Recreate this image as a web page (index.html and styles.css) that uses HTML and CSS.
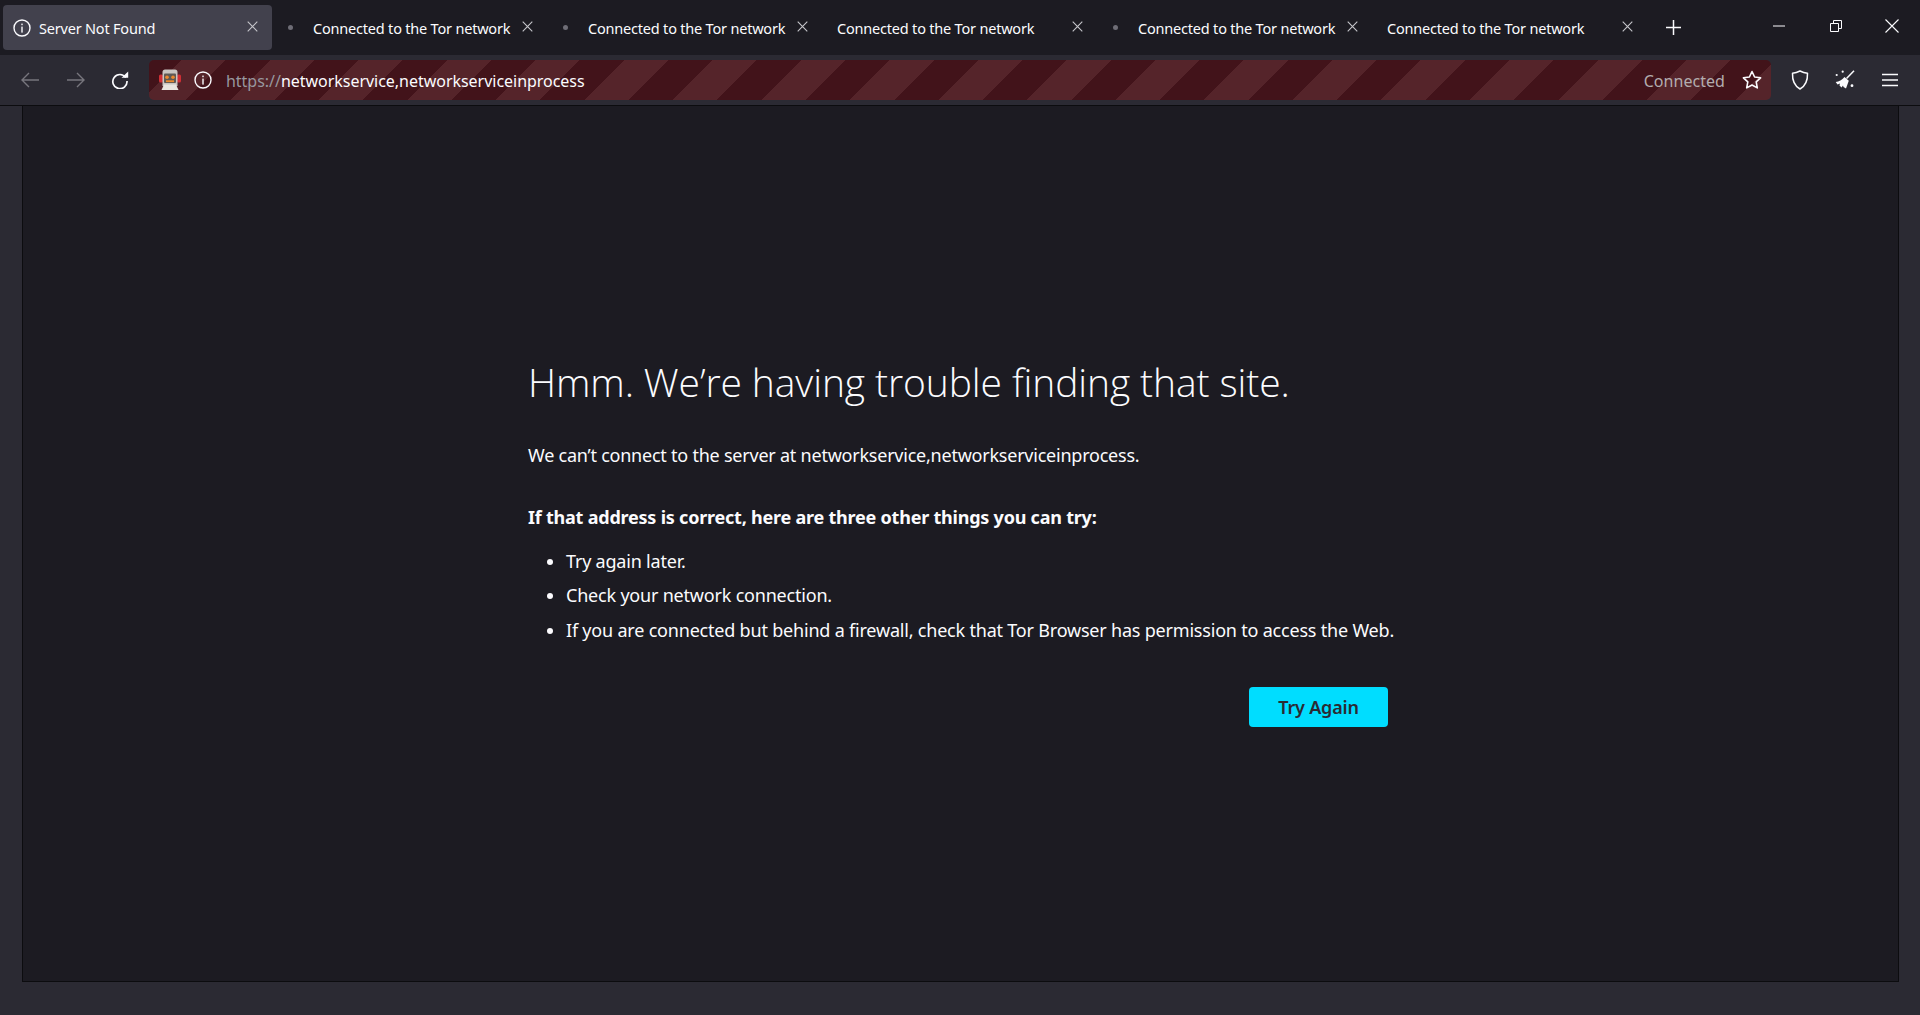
FILE: index.html
```html
<!DOCTYPE html>
<html lang="en">
<head>
<meta charset="utf-8">
<title>Server Not Found</title>
<link rel="stylesheet" href="styles.css">
</head>
<body>
<svg class="defs" width="0" height="0" aria-hidden="true">
  <symbol id="info" viewBox="0 0 18 18">
    <circle cx="9" cy="9" r="8" fill="none" stroke="currentColor" stroke-width="1.4"/>
    <rect x="8.3" y="7.6" width="1.4" height="6" fill="currentColor"/>
    <rect x="8.3" y="4.6" width="1.4" height="1.6" fill="currentColor"/>
  </symbol>
  <symbol id="close" viewBox="0 0 11 11">
    <path d="M.7.7l9.6 9.6M10.3.7L.7 10.3" fill="none" stroke="currentColor" stroke-width="1.1"/>
  </symbol>
</svg>
<header class="tabbar">
  <div class="tab tab-active">
    <svg class="tab-info"><use href="#info"/></svg>
    <span class="tab-title">Server Not Found</span>
    <svg class="tab-close"><use href="#close"/></svg>
  </div>
  <div class="tab"><i class="tab-dot"></i><span class="tab-title">Connected to the Tor network</span><svg class="tab-close"><use href="#close"/></svg></div>
  <div class="tab"><i class="tab-dot"></i><span class="tab-title">Connected to the Tor network</span><svg class="tab-close"><use href="#close"/></svg></div>
  <div class="tab"><span class="tab-title">Connected to the Tor network</span><svg class="tab-close"><use href="#close"/></svg></div>
  <div class="tab"><i class="tab-dot"></i><span class="tab-title">Connected to the Tor network</span><svg class="tab-close"><use href="#close"/></svg></div>
  <div class="tab"><span class="tab-title">Connected to the Tor network</span><svg class="tab-close"><use href="#close"/></svg></div>
  <svg class="new-tab" viewBox="0 0 16 16"><path d="M8 0v16M0 8h16" fill="none" stroke="currentColor" stroke-width="1.6"/></svg>
  <div class="window-controls">
    <svg class="win-icon" viewBox="0 0 12 12"><path d="M0 6h12" stroke="currentColor" fill="none"/></svg>
    <svg class="win-icon" viewBox="0 0 12 12"><path d="M.5 3.5h8v8h-8zM3.5 3V.5h8v8H9" stroke="currentColor" fill="none"/></svg>
    <svg class="win-icon win-x" viewBox="0 0 14 14"><path d="M.5.5l13 13M13.500.5l-13 13" stroke="currentColor" fill="none" stroke-width="1.1"/></svg>
  </div>
</header>
<nav class="toolbar">
  <svg class="nav-icon nav-dim" viewBox="0 0 18 16"><path d="M1 8h17M8 1L1 8l7 7" fill="none" stroke="currentColor" stroke-width="1.4"/></svg>
  <svg class="nav-icon nav-dim" viewBox="0 0 18 16"><path d="M0 8h17M10 1l7 7-7 7" fill="none" stroke="currentColor" stroke-width="1.4"/></svg>
  <svg class="nav-icon nav-reload" viewBox="0 0 18 18"><path d="M14.800 6.600A7.100 7.100 0 1 0 16 10" fill="none" stroke="currentColor" stroke-width="1.7"/><path d="M10.500 6.800L17.200 6.800 17.200 .6z" fill="currentColor"/></svg>
  <div class="urlbar">
    <svg class="robot" viewBox="0 0 22 22">
      <rect x="0" y="5.500" width="4" height="8" rx="1.500" fill="#cf2f35"/>
      <rect x="18" y="5.500" width="4" height="8" rx="1.500" fill="#cf2f35"/>
      <path d="M6 .5h10c1.500 0 2.500 1 2.500 2.500v14h-15V3C3.500 1.500 4.500.5 6 .5z" fill="#c9c6c1"/>
      <rect x="5" y="4.500" width="12" height="9.500" rx="1" fill="#5f5a55"/>
      <circle cx="8" cy="8.300" r="1.800" fill="#ea8a2e"/>
      <circle cx="14" cy="8.300" r="1.800" fill="#ea8a2e"/>
      <rect x="7" y="11.300" width="8" height="1.800" fill="#ea8a2e"/>
      <path d="M5 15.500h12l2.500 5.500h-17z" fill="#e9e6df"/>
    </svg>
    <svg class="url-info"><use href="#info"/></svg>
    <span class="url"><span class="url-scheme">https://</span>networkservice,networkserviceinprocess</span>
    <span class="url-status">Connected</span>
    <svg class="star" viewBox="0 0 20 20"><path d="M10 1.500l2.600 5.500 6 .8-4.400 4.100 1.100 6L10 15l-5.300 2.900 1.100-6L1.400 7.800l6-.8z" fill="none" stroke="currentColor" stroke-width="1.600" stroke-linejoin="round"/></svg>
  </div>
  <svg class="tool-icon tool-shield" viewBox="0 0 18 20"><path d="M9 1c2.500 1.300 5 2 7.500 2.200.3 7.500-2.300 12.800-7.500 15.800C3.800 16 1.200 10.700 1.500 3.200 4 3 6.500 2.300 9 1z" fill="none" stroke="currentColor" stroke-width="1.500" stroke-linejoin="round"/></svg>
  <svg class="tool-icon tool-broom" viewBox="0 0 20 20"><path d="M19 .7l-7.500 7.800" fill="none" stroke="currentColor" stroke-width="1.500"/><path d="M9.500 7l4.300 3.800-2.800 7.700-2.500-1.500-.5-1.500-1.500 2-2-2 .5-2-2.500 1L.7 12c3.300-.5 6.300-2 8.800-5z" fill="currentColor"/><circle cx="7.700" cy="1.700" r="1.100" fill="currentColor"/><circle cx="1.700" cy="5" r="1.100" fill="currentColor"/><circle cx="17" cy="15.700" r="1.400" fill="currentColor"/></svg>
  <svg class="tool-icon tool-menu" viewBox="0 0 16 14"><path d="M0 1.500h16M0 7h16M0 12.500h16" fill="none" stroke="currentColor" stroke-width="1.500"/></svg>
</nav>
<main class="frame">
  <section class="error">
    <h1 class="error-title">Hmm. We’re having trouble finding that site.</h1>
    <p class="error-lead">We can’t connect to the server at networkservice,networkserviceinprocess.</p>
    <p class="error-hint">If that address is correct, here are three other things you can try:</p>
    <ul class="error-list">
      <li>Try again later.</li>
      <li>Check your network connection.</li>
      <li>If you are connected but behind a firewall, check that Tor Browser has permission to access the Web.</li>
    </ul>
    <div class="error-actions"><button class="retry" type="button">Try Again</button></div>
  </section>
</main>
</body>
</html>
```
FILE: styles.css
```css
* { box-sizing: border-box; }
html, body { height: 100%; }
body {
  margin: 0;
  height: 1015px;
  overflow: hidden;
  display: flex;
  flex-direction: column;
  background: #2b2a33;
  color: #fbfbfe;
  font-family: "Noto Sans", "Open Sans", sans-serif;
}
.defs { position: absolute; }

.tabbar {
  height: 55px;
  flex: none;
  display: flex;
  align-items: center;
  background: #1c1b22;
}
.tab {
  width: 275px;
  height: 45px;
  flex: none;
  display: flex;
  align-items: center;
  padding: 0 17px 0 12px;
  font-size: 14.500px;
  letter-spacing: -0.2px;
  position: relative;
}
.tab-active { background: #42414d; border-radius: 4px; width: 269px; margin: 0 3px; padding-left: 10px; padding-right: 14px; }
.tab-info { width: 18px; height: 18px; margin-right: 8px; flex: none; }
.tab-dot { width: 5px; height: 5px; border-radius: 50%; background: #6e6d76; margin: 0 20px 0 1px; flex: none; }
.tab-title { white-space: nowrap; }
.tab-close { width: 11px; height: 11px; margin-left: auto; color: #c6c6cb; flex: none; margin-top: -2px; }
.new-tab { width: 15px; height: 15px; margin-left: 16px; flex: none; }
.window-controls { margin-left: auto; display: flex; align-items: center; gap: 45px; padding-right: 21px; margin-top: -4px; }
.win-icon { width: 12px; height: 12px; display: block; }
.win-x { width: 14px; height: 14px; margin-left: -2px; }

.toolbar {
  height: 51px;
  flex: none;
  display: flex;
  align-items: center;
  padding: 0 0 1px 21px;
  border-bottom: 1px solid #0c0c0f;
  background: #2b2a33;
}
.nav-icon { flex: none; }
.nav-dim { width: 18px; height: 16px; color: #77767d; margin-right: 28px; }
.nav-reload { width: 18px; height: 18px; margin-left: -2px; margin-right: 20px; }
.urlbar {
  width: 1622px;
  height: 40px;
  flex: none;
  display: flex;
  align-items: center;
  border-radius: 5px;
  padding: 0 9px 0 10px;
  font-size: 16px;
  background: repeating-linear-gradient(135deg, #42131a 0, #42131a 23px, #55242a 23px, #55242a 54.300px, #42131a 54.300px, #42131a 62.600px);
}
.robot { width: 22px; height: 22px; margin-right: 13px; flex: none; }
.url-info { width: 18px; height: 18px; margin-right: 14px; flex: none; }
.url { white-space: nowrap; letter-spacing: -0.03px; padding-top: 2px; }
.url-scheme { color: #97979e; }
.url-status { margin-left: auto; color: #b3acae; letter-spacing: 0.05px; padding-top: 2px; }
.star { width: 20px; height: 20px; margin-left: 17px; flex: none; }
.tool-icon { flex: none; }
.tool-shield { width: 18px; height: 20px; margin-left: 20px; }
.tool-broom { width: 20px; height: 20px; margin-left: 26px; }
.tool-menu { width: 16px; height: 14px; margin-left: 27px; }

.frame {
  flex: 1;
  margin: 0 21px 33px 22px;
  border: 1px solid #0c0c0f;
  border-top: 0;
  background: #1c1b22;
  padding: 251px 0 0 505px;
}
.error { width: 860px; }
.error-title { margin: 0; font-family: "Open Sans", "Noto Sans", sans-serif; font-size: 39px; font-weight: 300; line-height: 50px; letter-spacing: -0.1px; }
.error-lead { margin: 34px 0 0; font-size: 18px; line-height: 28px; letter-spacing: -0.23px; }
.error-hint { margin: 34px 0 0; font-size: 18px; line-height: 28px; font-weight: 700; letter-spacing: -0.22px; }
.error-list { margin: 16px 0 0; padding: 0 0 0 38px; font-size: 18px; line-height: 28px; letter-spacing: -0.2px; white-space: nowrap; }
.error-list li { margin-bottom: 6.400px; }
.error-actions { display: flex; justify-content: flex-end; margin-top: 43px; }
.retry {
  width: 139px;
  height: 40px;
  border: 0;
  border-radius: 4px;
  background: #00ddff;
  color: #2b2a33;
  font: 600 18px "Noto Sans", sans-serif;
  letter-spacing: -0.2px;
}
```
